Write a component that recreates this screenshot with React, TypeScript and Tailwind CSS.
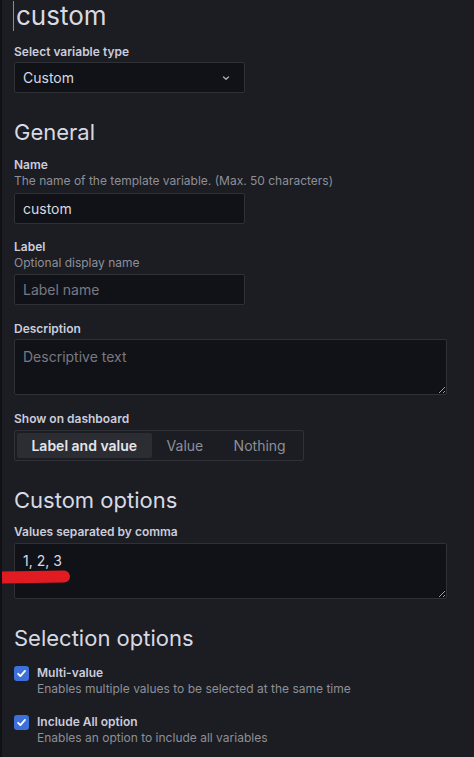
import React from 'react';

const font = { fontFamily: 'Inter, "Noto Sans", sans-serif' };

function FieldLabel({ children, className = '' }: { children: React.ReactNode; className?: string }) {
  return (
    <div className={`text-[12px] leading-[17px] font-semibold text-[#ccccdc] ${className}`}>{children}</div>
  );
}

function Hint({ children }: { children: React.ReactNode }) {
  return <div className="text-[12px] leading-[16px] text-[#8e8f98]">{children}</div>;
}

function Check() {
  return (
    <div className="w-[15px] h-[15px] rounded-[3px] bg-[#3d71d9] grid place-items-center shrink-0">
      <svg width="11" height="11" viewBox="0 0 12 12" fill="none">
        <path d="M2.3 6.3 L4.8 8.8 L9.8 3.2" stroke="white" strokeWidth="2" strokeLinecap="round" strokeLinejoin="round" />
      </svg>
    </div>
  );
}

export default function App() {
  const [shown, setShown] = React.useState<'label' | 'value' | 'nothing'>('label');

  const segments: { key: 'label' | 'value' | 'nothing'; text: string; w: string }[] = [
    { key: 'label', text: 'Label and value', w: 'w-[135px]' },
    { key: 'value', text: 'Value', w: 'w-[67px]' },
    { key: 'nothing', text: 'Nothing', w: 'w-[83px]' },
  ];

  return (
    <div className="relative min-h-screen bg-[#1b1d22] border-l-2 border-[#101114] pl-[12px] overflow-hidden" style={font}>
      {/* titre éditable */}
      <div className="flex items-center h-[31px] text-[26px] leading-[31px] text-[#d8d9e2]">
        <span className="inline-block w-px h-[30px] bg-[#8a8b93] mr-[2px] -ml-px" />
        custom
      </div>

      <FieldLabel className="mt-[12px]">Select variable type</FieldLabel>
      <div className="mt-[2px] w-[231px] h-[31px] flex items-center justify-between px-[8px] bg-[#111217] border border-[#2f3137] rounded-[2px] text-[14px] text-[#d8d9e2]">
        <span>Custom</span>
        <svg width="10" height="10" viewBox="0 0 10 10" fill="none" className="mr-[5px]">
          <path d="M2.5 4 L5 6.3 L7.5 4" stroke="#a9aab3" strokeWidth="1.4" strokeLinecap="round" strokeLinejoin="round" />
        </svg>
      </div>

      <h2 className="mt-[24px] text-[22px] leading-[30px] text-[#d8d9e2]">General</h2>

      <FieldLabel className="mt-[9px]">Name</FieldLabel>
      <Hint>The name of the template variable. (Max. 50 characters)</Hint>
      <input
        className="mt-[4px] block w-[231px] h-[31px] px-[8px] bg-[#111217] border border-[#2f3137] rounded-[2px] text-[14px] text-[#d8d9e2] outline-none"
        defaultValue="custom"
      />

      <FieldLabel className="mt-[14px]">Label</FieldLabel>
      <Hint>Optional display name</Hint>
      <input
        className="mt-[3px] block w-[231px] h-[31px] px-[8px] bg-[#111217] border border-[#2f3137] rounded-[2px] text-[14px] text-[#d8d9e2] placeholder:text-[#787982] outline-none"
        placeholder="Label name"
      />

      <FieldLabel className="mt-[15px]">Description</FieldLabel>
      <textarea
        className="mt-[2px] block w-[433px] h-[56px] px-[8px] py-[6px] bg-[#111217] border border-[#2f3137] rounded-[2px] text-[14px] text-[#d8d9e2] placeholder:text-[#787982] outline-none"
        placeholder="Descriptive text"
      />

      <FieldLabel className="mt-[15px]">Show on dashboard</FieldLabel>
      <div className="mt-[3px] w-[290px] h-[31px] flex p-[2px] border border-[#2f3137] rounded-[2px]">
        {segments.map((s) => (
          <button
            key={s.key}
            onClick={() => setShown(s.key)}
            className={`${s.w} h-full flex items-center justify-center text-[14px] rounded-[2px] ${
              shown === s.key ? 'bg-[#2b2d32] text-[#e4e5ec] font-semibold' : 'text-[#8e8f98]'
            }`}
          >
            {s.text}
          </button>
        ))}
      </div>

      <h2 className="mt-[24px] text-[22px] leading-[30px] text-[#d8d9e2]">Custom options</h2>

      <FieldLabel className="mt-[8px]">Values separated by comma</FieldLabel>
      <textarea
        className="mt-[3px] block w-[433px] h-[56px] px-[8px] py-[6px] bg-[#111217] border border-[#2f3137] rounded-[2px] text-[14px] text-[#d8d9e2] outline-none"
        defaultValue="1, 2, 3"
      />

      <h2 className="mt-[24px] text-[22px] leading-[30px] text-[#d8d9e2]">Selection options</h2>

      <div className="mt-[11px] flex gap-[8px]">
        <div className="pt-[2px]">
          <Check />
        </div>
        <div>
          <FieldLabel>Multi-value</FieldLabel>
          <Hint>Enables multiple values to be selected at the same time</Hint>
        </div>
      </div>

      <div className="mt-[16px] flex gap-[8px]">
        <div className="pt-[2px]">
          <Check />
        </div>
        <div>
          <FieldLabel>Include All option</FieldLabel>
          <Hint>Enables an option to include all variables</Hint>
        </div>
      </div>

      {/* trait rouge d'annotation */}
      <div className="absolute left-0 top-[571px] w-[68px] h-[12px] rounded-r-full bg-[#e11b22] -rotate-1" />
    </div>
  );
}
